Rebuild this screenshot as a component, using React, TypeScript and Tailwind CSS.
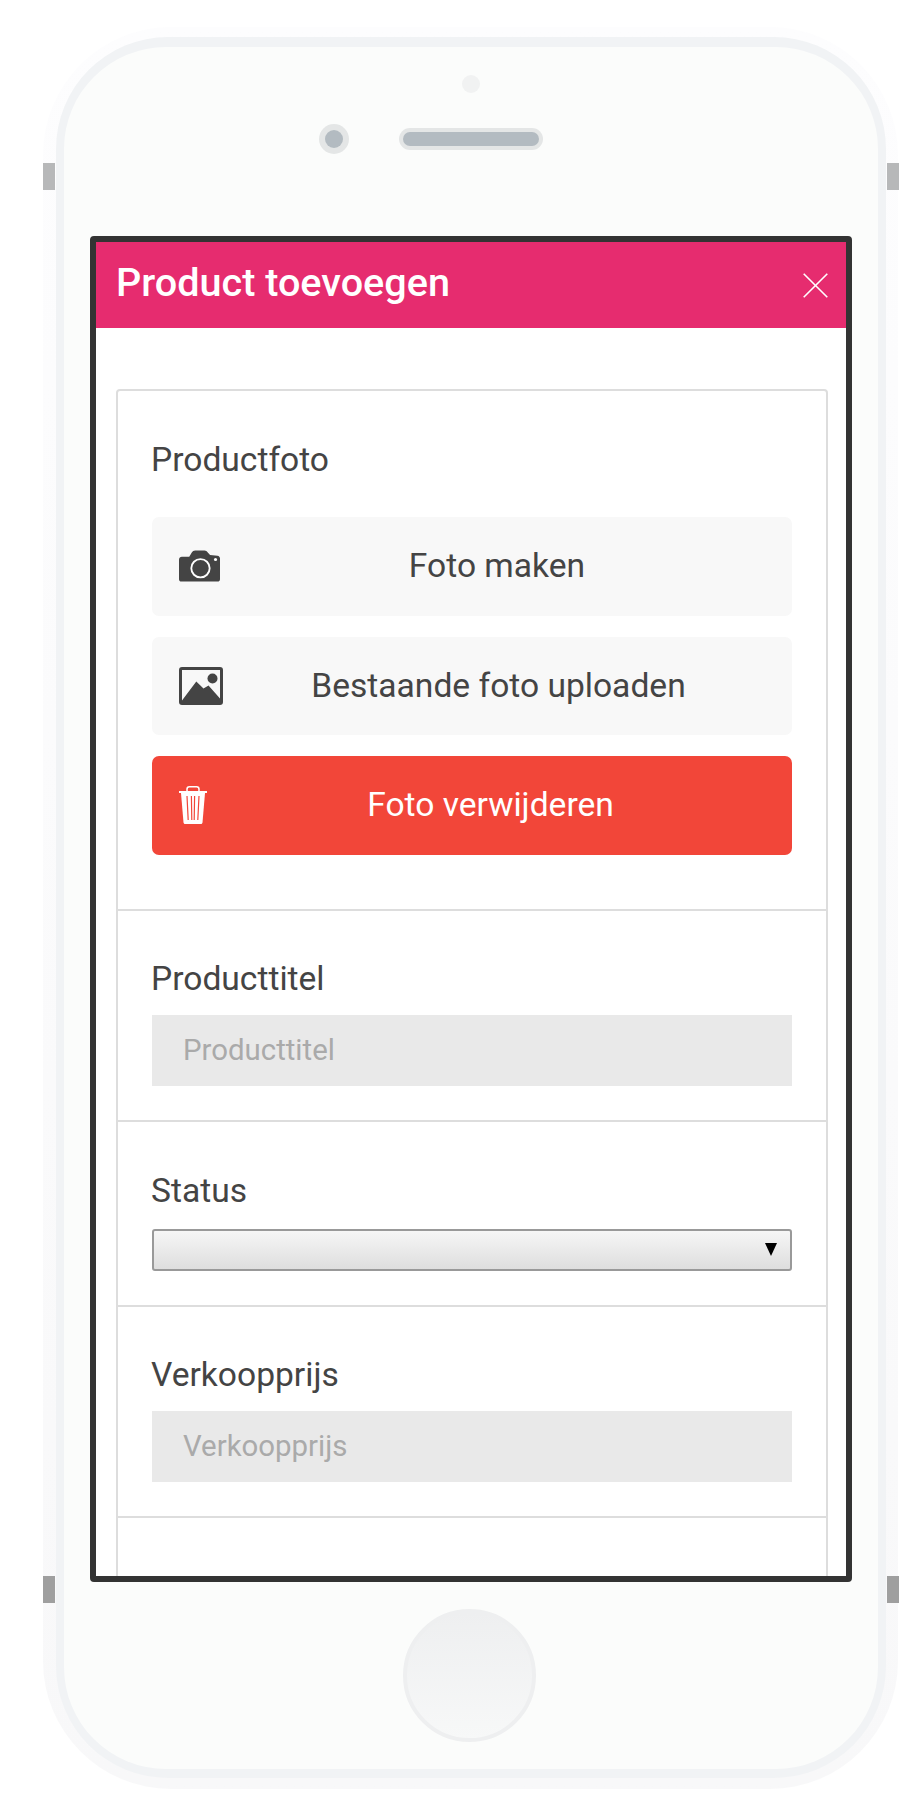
import React from "react";

function CameraIcon() {
  return (
    <svg width="41" height="32" viewBox="0 0 42 32" className="shrink-0">
      <path
        fill="#444444"
        d="M3 6.5h7.5l2.6-4.3C13.9 0.9 15 0 16.5 0h9.6c1.5 0 2.6 0.9 3.4 2.2l2.3 2.6 L39.5 5.5C41 5.7 42 6.8 42 8.3V29.5C42 31 41 32 39.5 32H2.5C1 32 0 31 0 29.5V9.5C0 7.8 1.3 6.5 3 6.5Z"
      />
      <circle cx="22" cy="18.3" r="9.4" fill="none" stroke="#ffffff" strokeWidth="1.9" />
      <circle cx="37.4" cy="9.4" r="1.6" fill="#ffffff" />
    </svg>
  );
}

function ImageIcon() {
  return (
    <svg width="44" height="38" viewBox="0 0 44 38" className="shrink-0">
      <rect x="1.5" y="1.5" width="41" height="35" rx="1.5" fill="none" stroke="#444444" strokeWidth="3" />
      <circle cx="33.5" cy="11.5" r="5" fill="#444444" />
      <path fill="#444444" d="M3 33.5L17.3 14.5L24.5 21.5L29.5 18.5L41 31.5V37H3Z" />
    </svg>
  );
}

function TrashIcon() {
  return (
    <svg width="28" height="38" viewBox="0 0 28 38" className="shrink-0">
      <rect x="8" y="0.8" width="12" height="6" rx="2.4" fill="none" stroke="#ffffff" strokeWidth="1.5" />
      <rect x="0" y="5" width="28" height="2" fill="#ffffff" />
      <path fill="#ffffff" d="M2 7H26L23.5 36.5C23.4 37.4 22.8 38 22 38H6C5.2 38 4.6 37.4 4.5 36.5Z" />
      <path d="M8 10L9.2 34M12.4 10L12.8 34M15.6 10L15.2 34M20 10L18.8 34" stroke="#f24639" strokeWidth="1.2" fill="none" />
    </svg>
  );
}

function ActionButton({
  icon,
  label,
  danger,
}: {
  icon: React.ReactNode;
  label: string;
  danger?: boolean;
}) {
  return (
    <button
      type="button"
      className={
        danger
          ? "flex h-[98.5px] w-full items-center rounded-[7px] bg-[#f24639] px-[27px] text-[33.6px] leading-[36px] text-white"
          : "flex h-[98.5px] w-full items-center rounded-[7px] bg-[#f8f8f8] px-[27px] text-[33.6px] leading-[36px] text-[#444444]"
      }
    >
      {icon}
      <span className="ml-[9px] flex-1 text-center">{label}</span>
    </button>
  );
}

function Label({ children }: { children: React.ReactNode }) {
  return <div className="-ml-px mb-[18px] text-[33.6px] leading-[36px] text-[#444444]">{children}</div>;
}

function TextField({ placeholder }: { placeholder: string }) {
  return (
    <input
      placeholder={placeholder}
      className="block h-[71px] w-full bg-[#e9e9e9] px-[31px] text-[29.4px] text-[#444444] outline-none placeholder:text-[#aaaaaa]"
    />
  );
}

export default function App() {
  return (
    <div className="h-[1818px] w-[904px] overflow-hidden bg-white pl-[43px] pt-[27px] font-['Roboto',sans-serif]">
      {/* outer shell */}
      <div className="relative h-[1762px] w-[855px] rounded-[128px] bg-linear-to-b from-[#fdfdfe] to-[#f8f8f9] pl-[13px] pt-[10px]">
        <div className="absolute left-0 top-[136px] h-[27px] w-[12px] bg-[#b7b8b9]" />
        <div className="absolute left-[844px] top-[136px] h-[27px] w-[12px] bg-[#b7b8b9]" />
        <div className="absolute left-0 top-[1549px] h-[27px] w-[12px] bg-[#9f9f9f]" />
        <div className="absolute left-[844px] top-[1549px] h-[27px] w-[12px] bg-[#9f9f9f]" />

        {/* ring */}
        <div className="h-[1741px] w-[830px] rounded-[112px] bg-[#f1f3f5] px-[8px] pt-[10px]">
          {/* face */}
          <div className="h-[1722px] w-[814px] rounded-[102px] bg-[#fbfcfb] pt-[28px]">
            <div className="ml-[398px] h-[18px] w-[18px] rounded-full bg-[#f1f2f2]" />

            <div className="mt-[31px] flex h-[30px] items-center gap-[50px] pl-[255px]">
              <div className="flex h-[30px] w-[30px] items-center justify-center rounded-full bg-[#e4e6e6]">
                <div className="h-[18px] w-[18px] rounded-full bg-[#b3bbc1]" />
              </div>
              <div className="flex h-[22px] w-[144px] items-center rounded-full bg-[#e4e6e6] px-[4px]">
                <div className="h-[14px] w-full rounded-full bg-[#b3bbc1]" />
              </div>
            </div>

            {/* screen */}
            <div className="ml-[26px] mt-[82px] h-[1346px] w-[762px] overflow-hidden rounded-[4px] border-[6px] border-[#333333] bg-white">
              <div className="flex h-[86px] items-center justify-between bg-[#e62c6f] pl-[20px] pr-[18px]">
                <h1 className="pb-[5px] text-[39.6px] font-medium leading-[44px] text-white">Product toevoegen</h1>
                <svg width="25" height="25" viewBox="0 0 25 25" className="shrink-0">
                  <path d="M0.7 0.7L24.3 24.3M24.3 0.7L0.7 24.3" stroke="#ffffff" strokeWidth="1.6" fill="none" />
                </svg>
              </div>

              <div className="ml-[20px] mr-[18px] mt-[61px] rounded-[4px] border-2 border-[#dddddd]">
                <div className="border-b-2 border-[#dddddd] px-[34px] pb-[54px] pt-[51px]">
                  <div className="-ml-px mb-[39px] text-[33.6px] leading-[36px] text-[#444444]">Productfoto</div>
                  <div className="flex flex-col gap-[21px]">
                    <ActionButton icon={<CameraIcon />} label="Foto maken" />
                    <ActionButton icon={<ImageIcon />} label="Bestaande foto uploaden" />
                    <ActionButton icon={<TrashIcon />} label="Foto verwijderen" danger />
                  </div>
                </div>

                <div className="border-b-2 border-[#dddddd] px-[34px] pb-[34px] pt-[50px]">
                  <Label>Producttitel</Label>
                  <TextField placeholder="Producttitel" />
                </div>

                <div className="border-b-2 border-[#dddddd] px-[34px] pb-[34px] pt-[51px]">
                  <div className="-ml-px mb-[20px] text-[33.6px] leading-[36px] text-[#444444]">Status</div>
                  <div className="flex h-[42px] w-full items-center justify-end rounded-[3px] border-2 border-[#999999] bg-linear-to-b from-[#f6f6f6] to-[#dedede] pr-[13px]">
                    <svg width="12" height="13" viewBox="0 0 12 13">
                      <path d="M0 0H12L6 13Z" fill="#000000" />
                    </svg>
                  </div>
                </div>

                <div className="border-b-2 border-[#dddddd] px-[34px] pb-[34px] pt-[50px]">
                  <Label>Verkoopprijs</Label>
                  <TextField placeholder="Verkoopprijs" />
                </div>

                <div className="h-[200px]" />
              </div>
            </div>

            {/* home button */}
            <div className="ml-[339px] mt-[27px] h-[133px] w-[133px] rounded-full border-[4px] border-[#eeeff0] bg-linear-to-b from-[#eeeff0] to-[#f7f8f8]" />
          </div>
        </div>
      </div>
    </div>
  );
}
